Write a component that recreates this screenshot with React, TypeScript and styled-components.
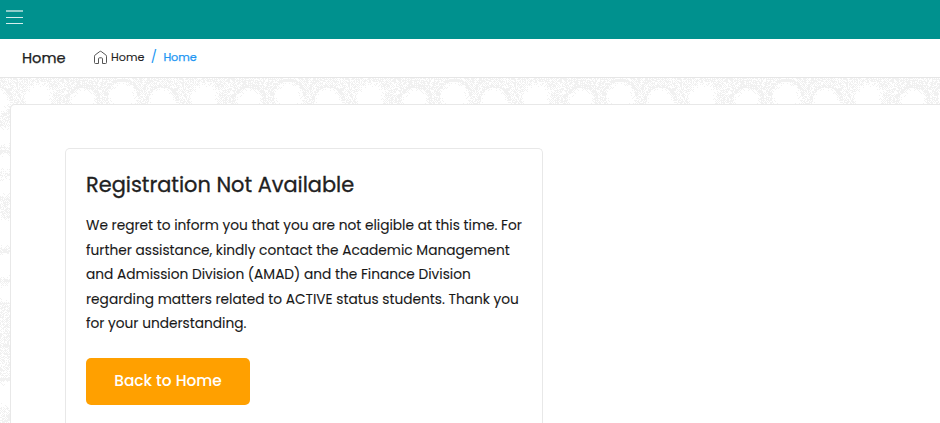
import React from "react";
import styled, { createGlobalStyle } from "styled-components";

const GlobalStyle = createGlobalStyle`
  * { box-sizing: border-box; }
  html, body, #root { margin: 0; height: 100%; }
  body { overflow: hidden; background: #fff; font-family: Poppins, Inter, sans-serif; color: #212121; }
`;

const TILE = 166;

type Disc = { x: number; y: number; r: number; ring: boolean };
const DISCS: Disc[] = [
  { x: 38, y: 19, r: 15, ring: false },
  { x: 83, y: 23, r: 14, ring: true },
  { x: 122, y: 18, r: 15, ring: true },
  { x: 162, y: 23, r: 14, ring: true },
  { x: 5, y: 58, r: 11, ring: false },
  { x: 4, y: 84, r: 10, ring: true },
  { x: 5, y: 108, r: 11, ring: false },
  { x: 2, y: 155, r: 16, ring: false },
  { x: 5, y: 188, r: 14, ring: true },
  { x: 5, y: 214, r: 11, ring: true },
  { x: 5, y: 316, r: 14, ring: true },
];

function inkAt(x: number, y: number) {
  let ink = 0.55;
  for (const d of DISCS) {
    const raw = Math.abs(x - d.x);
    const dx = Math.min(raw, TILE - raw);
    const dist = Math.hypot(dx, y - d.y);
    if (dist < d.r) ink = Math.min(ink, Math.max(0, (dist - d.r + 5) / 12));
    else if (d.ring && dist < d.r + 3 && y < d.y) ink = Math.max(ink, 0.85);
  }
  return ink;
}

function stipple(width: number, height: number) {
  let path = "";
  let seed = 7;
  for (let y = 0; y < height; y++) {
    for (let x = 0; x < width; x++) {
      seed = (seed * 1103515245 + 12345) % 2147483648;
      const threshold = ((x + y) % 2) * 0.3 + (seed / 2147483648) * 0.7;
      if (inkAt(x, y) > threshold) path += `M${x} ${y}h1v1h-1z`;
    }
  }
  return path;
}

const STIPPLE = stipple(TILE, 345);

const Page = styled.div`
  height: 423px;
  display: flex;
  flex-direction: column;
`;
const TopBar = styled.header`
  height: 39px;
  flex: none;
  background: #00918e;
  padding: 10px 6px;
`;
const MenuButton = styled.button`
  display: flex;
  flex-direction: column;
  width: 17px;
  padding: 0;
  border: 0;
  background: none;
`;
const MenuLine = styled.span<{ $soft?: boolean }>`
  height: ${(p) => (p.$soft ? 2 : 1)}px;
  margin-bottom: 5px;
  background: ${(p) => (p.$soft ? "#8dcdcb" : "#d5eeed")};
`;
const SubHeader = styled.div`
  height: 39px;
  flex: none;
  display: flex;
  align-items: center;
  padding: 0 22px 2px;
  background: #fff;
  border-bottom: 1px solid #e6e6e6;
`;
const PageTitle = styled.h1`
  margin: 1px 0 0;
  width: 71px;
  font-size: 14.6px;
  font-weight: 400;
  line-height: 20px;
  -webkit-text-stroke: 0.25px currentColor;
`;
const Crumbs = styled.nav`
  display: flex;
  align-items: center;
  font-size: 11.2px;
  line-height: 18px;
`;
const HomeIcon = styled.svg`
  width: 15px;
  height: 15px;
  margin-right: 3px;
`;
const Crumb = styled.span<{ $active?: boolean }>`
  color: ${(p) => (p.$active ? "#2196f3" : "#212121")};
  -webkit-text-stroke: ${(p) => (p.$active ? "0.25px" : "0.1px")} currentColor;
`;
const Slash = styled.span`
  width: 19px;
  text-align: center;
  color: #2196f3;
  font-size: 13px;
`;
const Content = styled.main`
  flex: 1;
  min-height: 0;
  position: relative;
  padding: 26px 0 0 10px;
`;
const Backdrop = styled.svg`
  position: absolute;
  inset: 0;
  width: 100%;
  height: 100%;
`;
const Panel = styled.section`
  position: relative;
  height: 100%;
  padding: 43px 0 0 54px;
  background: #fff;
  border: solid #e8e8e8;
  border-width: 1px 0 0 1px;
  border-radius: 5px 0 0 0;
`;
const Card = styled.article`
  width: 478px;
  height: 100%;
  padding: 22px 20px 0;
  border: 1px solid #e8e8e8;
  border-bottom: 0;
  border-radius: 5px 5px 0 0;
`;
const CardTitle = styled.h2`
  margin: 0 0 15px;
  font-size: 20.9px;
  font-weight: 400;
  line-height: 28px;
  white-space: nowrap;
  -webkit-text-stroke: 0.3px currentColor;
`;
const Message = styled.p`
  margin: 0 0 21px;
  font-size: 13.72px;
  line-height: 24.6px;
  color: #181818;
  -webkit-text-stroke: 0.1px currentColor;
`;
const Line = styled.span`
  display: block;
  white-space: nowrap;
`;
const BackButton = styled.button`
  display: block;
  width: 164px;
  height: 47px;
  padding: 0 0 1px;
  border: 0;
  border-radius: 5px;
  background: #ffa000;
  color: #fff;
  font: 500 15.4px/20px Poppins, Inter, sans-serif;
`;

const LINES = [
  "We regret to inform you that you are not eligible at this time. For",
  "further assistance, kindly contact the Academic Management",
  "and Admission Division (AMAD) and the Finance Division",
  "regarding matters related to ACTIVE status students. Thank you",
  "for your understanding.",
];

export default function App() {
  return (
    <Page>
      <GlobalStyle />
      <TopBar>
        <MenuButton aria-label="Menu">
          <MenuLine $soft />
          <MenuLine />
          <MenuLine />
        </MenuButton>
      </TopBar>
      <SubHeader>
        <PageTitle>Home</PageTitle>
        <Crumbs>
          <HomeIcon viewBox="0 0 15 15" fill="none" stroke="#555" strokeWidth="1" strokeLinejoin="round">
            <path d="M1.5 6.2Q1.5 5.5 2.1 5L6.8 1.5Q7.5 1 8.2 1.5L12.9 5Q13.5 5.5 13.5 6.2V12.5a1 1 0 0 1-1 1H9.5V8.8a1 1 0 0 0-1-1H6.5a1 1 0 0 0-1 1v4.7H2.5a1 1 0 0 1-1-1z" />
          </HomeIcon>
          <Crumb>Home</Crumb>
          <Slash>/</Slash>
          <Crumb $active>Home</Crumb>
        </Crumbs>
      </SubHeader>
      <Content>
        <Backdrop aria-hidden="true" shapeRendering="crispEdges">
          <defs>
            <pattern id="stipple" width={TILE} height="345" patternUnits="userSpaceOnUse">
              <path d={STIPPLE} fill="#f1f1f1" />
            </pattern>
          </defs>
          <rect width="100%" height="100%" fill="url(#stipple)" />
        </Backdrop>
        <Panel>
          <Card>
            <CardTitle>Registration Not Available</CardTitle>
            <Message>
              {LINES.map((text) => (
                <Line key={text}>{text}</Line>
              ))}
            </Message>
            <BackButton>Back to Home</BackButton>
          </Card>
        </Panel>
      </Content>
    </Page>
  );
}
